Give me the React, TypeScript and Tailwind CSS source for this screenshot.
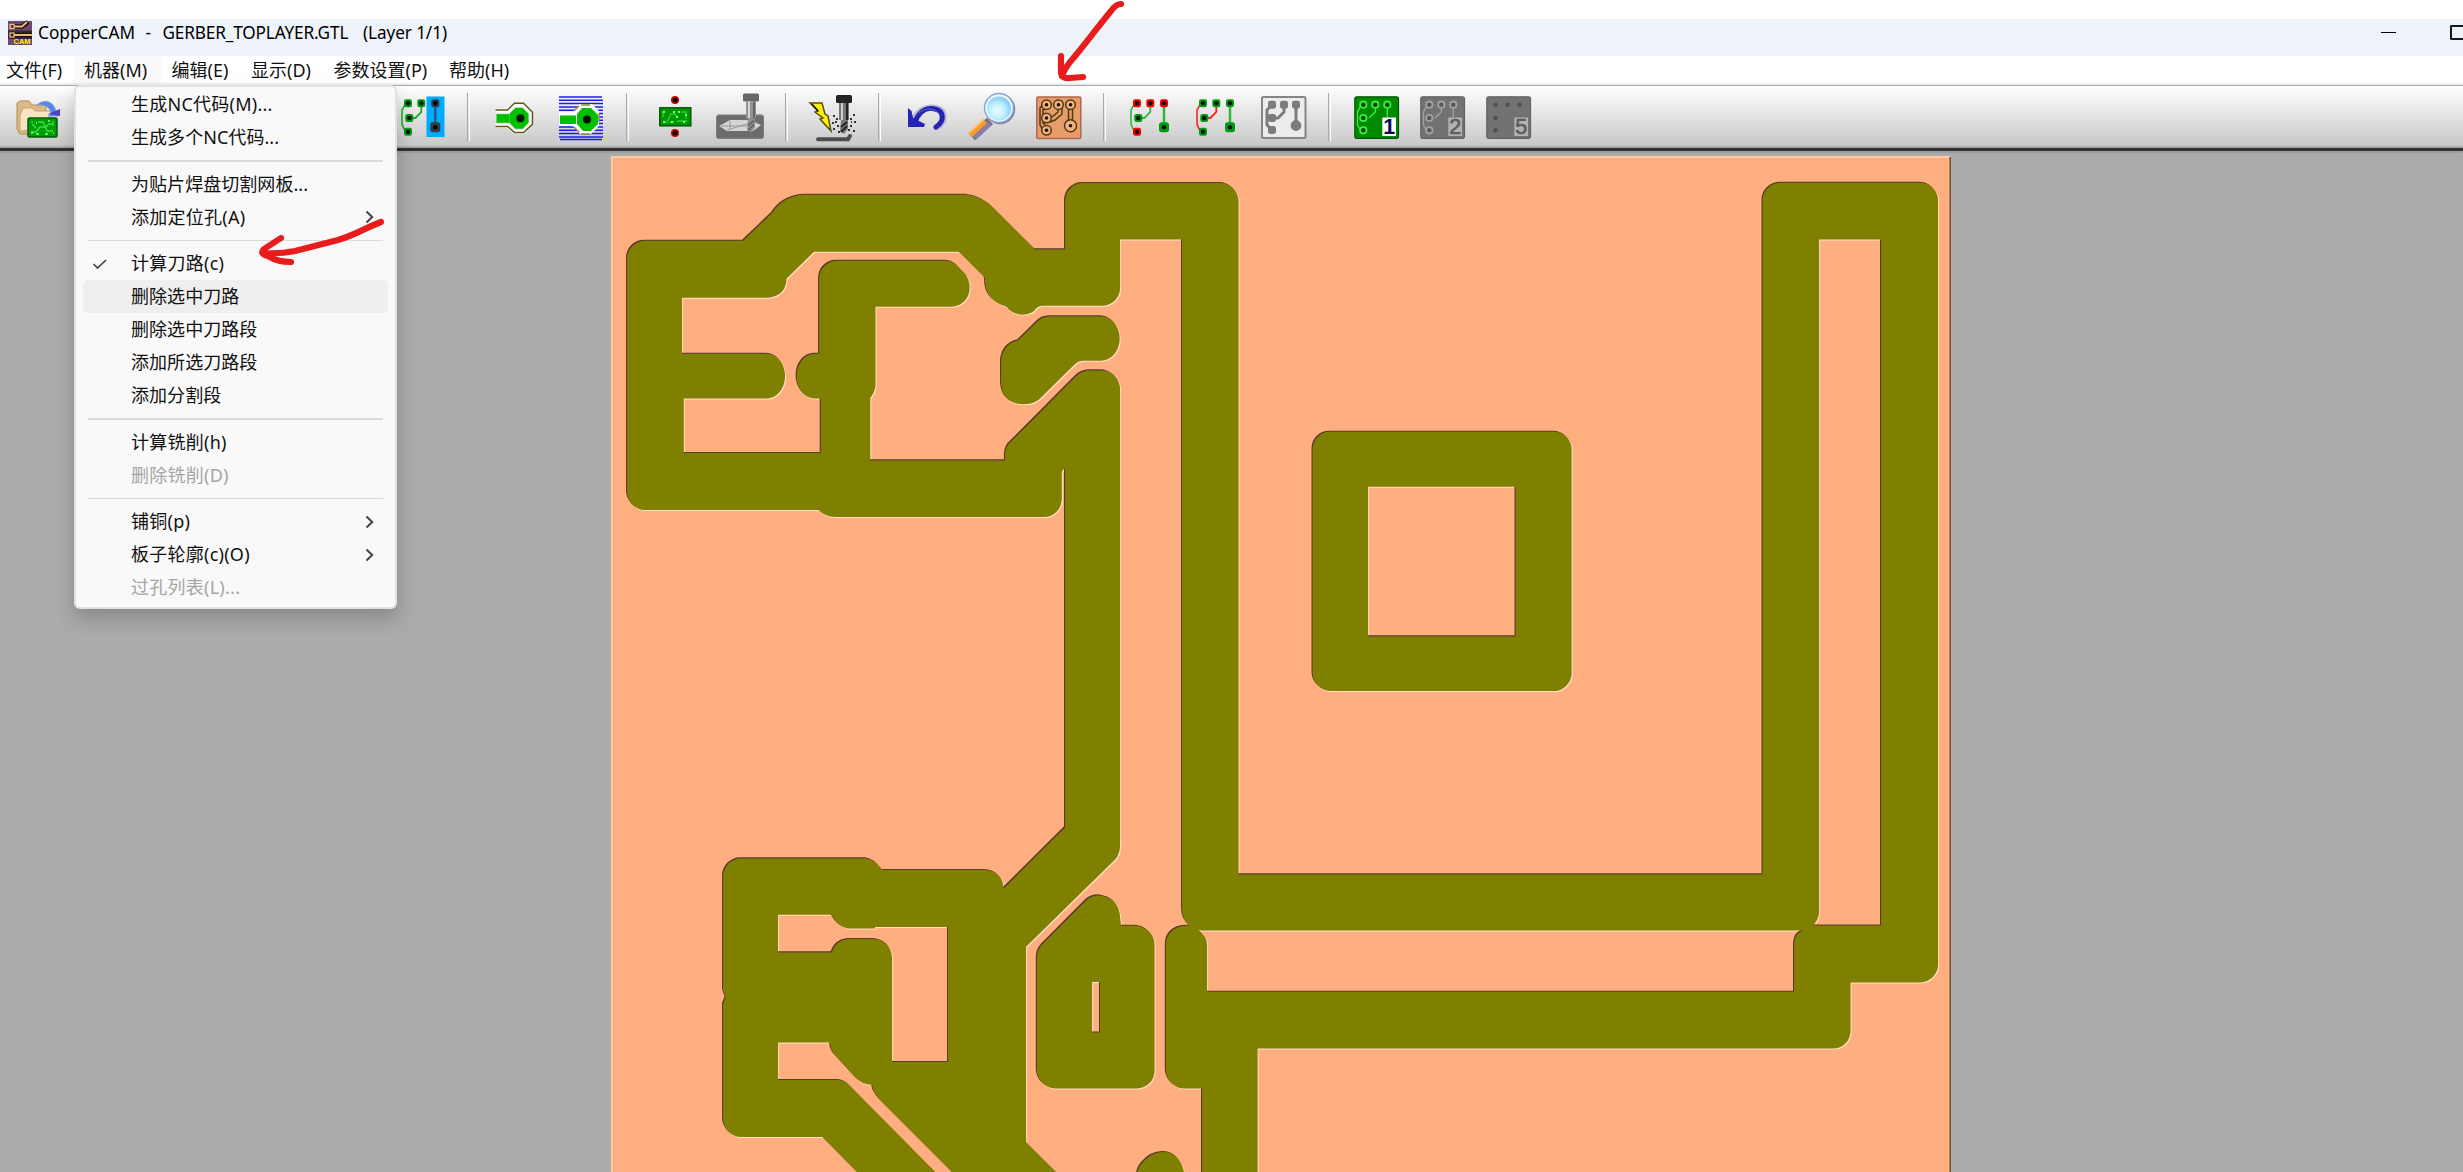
import React from "react";

const FONT = "font-['Noto_Sans','Noto_Sans_CJK_SC',sans-serif]";

/* ---------- board artwork ---------- */

const NET =
  "M627 259 A18 18 0 0 1 645 240.7 H743 L772 213 Q783 196 804 194.7 H966 Q982 196 995 209.5 L1035 249.3 H1065 V202 A18 18 0 0 1 1083 183 H1220 A18.5 18.5 0 0 1 1238.5 202 V874.3 H1762.5 V200 A18 18 0 0 1 1780 182.7 H1920 A18 18 0 0 1 1938 201 V964 A18 18 0 0 1 1920 982.3 H1850.5 V1031 A17.5 17.5 0 0 1 1833 1048.5 H1257.5 V1180 H1202 V1088.5 H1184 A19 19 0 0 1 1165.8 1069 V944 A20 18 0 0 1 1185 925.7 H1189 L1190.6 926.7 Q1182 920 1182 909 V239.3 H1120 V287 A18 18 0 0 1 1103 305.7 H1043 Q1038 306 1036 308.5 C1030 317 1014 317 1007 306.7 Q985 301 985 280 L984.6 277.3 L959 251.7 H814 L786.5 278.5 Q786 296 768 297.7 H682 V353.7 H767 A18 22.3 0 0 1 767 398.3 H683.7 V453 H820.7 V398.3 H814.5 A18 22.3 0 0 1 814.5 353.7 H819 V279 A18 18 0 0 1 837 260.7 H946 Q952 261 956 264.5 L966 275 C974 289 968 305 952 306.7 H875.4 V385 Q875 392 870.2 398 V460.3 H1005 Q1004 450 1008.5 444 L1074.8 377.3 Q1081 370.3 1090 370.3 H1101 A19 19 0 0 1 1120 389 V845 Q1120 854 1115 859.5 L1026 946.7 V1142.3 L1064 1180 H960 L879 1099 Q873 1092 872 1085 Q861 1084 855 1077 L833 1053 Q830 1048 830 1042.3 H778 V1080 H838 Q843 1080 847.5 1083.5 L943 1180 H865 L822.5 1137 H741 A18.5 18.5 0 0 1 723 1118 V1004 L725.6 997.5 L723 990 V876 A18 18 0 0 1 741 858.3 H866 Q874 859 882.5 870 H985 Q1002 871 1003.7 888.3 L1065 827.3 V468.3 Q1062 469 1061.7 473 V499 A18 18 0 0 1 1044 517 H835 Q825 517 819 510 H645 A18.5 18.5 0 0 1 627 491 Z";

const HOLES = [
  "M1198 930.5 H1803 Q1795 933 1794 943 V991.7 H1207 V945 Q1207 936 1198 930.5 Z",
  "M1819 239.3 H1881 V925.5 H1813 L1811 927 Q1819 921 1819 911 Z",
  "M778 914.7 H831.5 Q837 927 848 928.3 H875 V927 H948 V1062 H892 V958 Q891 941 874 939 H848 Q836 940 831.5 952.3 H778 Z",
].join(" ");

const ISLANDS = [
  "M1330 431.7 H1554 A17.5 17.5 0 0 1 1571.5 449 V673 A18 18 0 0 1 1553 691 H1331 A18.5 18.5 0 0 1 1312.5 673 V449 A17.5 17.5 0 0 1 1330 431.7 Z M1368 486.7 V636.3 H1515.5 V486.7 Z",
  "M1001 360 Q1003 344 1018.5 340 L1036 322.7 Q1042 316.3 1050 316.3 H1101 A18.6 22.2 0 0 1 1101 360.7 H1082 Q1078 361 1075 364 L1039 399.3 Q1031 405 1020 404 Q1002 402 1001 383 Z",
  "M1036.8 957 Q1037 949 1043 943.5 L1087 899.3 Q1093 895 1099 895.3 Q1119 898 1120 917 L1121 925.7 H1134 A20 19 0 0 1 1154.5 945 V1071 A17.5 17.5 0 0 1 1137 1088.3 H1055 A18.5 18.5 0 0 1 1036.8 1069 Z M1092 982 V1032.5 H1100 V982 Z",
  "M1136 1180 Q1137 1168 1142 1163 Q1151 1152 1163 1152 C1176 1152 1184 1162 1185 1180 Z",
].join(" ");

const COPPER = `${NET} ${HOLES} ${ISLANDS}`;

function Board() {
  return (
    <svg className="block h-[1016px] w-[1340px]" viewBox="611 156 1340 1016">
      <rect x="611" y="156" width="1340" height="1016" fill="#ffae80" />
      <g fillRule="evenodd">
        <path d={COPPER} fill="#ffe0c4" transform="translate(1.1 1.1)" />
        <path d={COPPER} fill="#5c3a2c" transform="translate(-1 -1)" />
        <path d={COPPER} fill="#808000" transform="translate(0.1 0.1)" />
      </g>
      <path d="M611.8 1172V157H1950" fill="none" stroke="#ffd3b5" strokeWidth="1.5" />
      <path d="M1950.2 157V1172" stroke="#7c5340" strokeWidth="1.6" />
    </svg>
  );
}

/* ---------- toolbar icons, each drawn in a 66x60 cell ---------- */

function Cell({ children }: { children: React.ReactNode }) {
  return (
    <svg className="h-[60px] w-[66px] shrink-0" viewBox="0 0 66 60" fill="none">
      {children}
    </svg>
  );
}

function Sep() {
  return (
    <div className="flex h-[60px] w-[27px] shrink-0 items-center justify-center">
      <div className="mt-[-2px] h-12 w-[3px] border-r-[1.5px] border-l-[1.5px] border-l-[#a9a9a9] border-r-white" />
    </div>
  );
}

function Pad({ x, y, c, r = 4 }: { x: number; y: number; c: string; r?: number }) {
  return (
    <g>
      <rect x={x - r} y={y - r} width={2 * r} height={2 * r} rx={r * 0.55} fill={c} />
      <circle cx={x} cy={y} r="2.2" fill="#000" opacity="0.9" />
    </g>
  );
}

const LEFT_TRACK = "M19 15.3L15.5 17.5L13 22V36L15 41L19 43.7";
const MID_TRACK = "M32.3 15.3V24L26.5 30H20";

function Net({ end, left, mid, middlePads }: { end: string; left: string; mid: string; middlePads: string }) {
  return (
    <g>
      <path d={LEFT_TRACK} stroke={left} strokeWidth="1.6" />
      <path d={MID_TRACK} stroke={mid} strokeWidth="1.8" />
      <Pad x={19} y={15.3} c={end} />
      <Pad x={32.3} y={15.3} c={end} />
      <Pad x={20.3} y={30} c={middlePads} />
      <Pad x={19} y={43.7} c={end} />
    </g>
  );
}

function FolderIcon() {
  return (
    <Cell>
      <path d="M12 15L15 13H24L27 17H41V24L44 25L40 46H15L12 41Z" fill="#dcb987" stroke="#b28a55" />
      <path d="M15 27L18 20H27L30 23H47L44 41L15 43Z" fill="#f6e4c2" stroke="#c6a370" />
      <path d="M32 17C38 11 49 12 51 24L55 22L53 28H43L46 25C45 20 41 16 32 17Z" fill="#5b86e8" stroke="#7ba2e6" />
      <path d="M43 26L55 21V28Z" fill="#4b44c4" />
      <rect x="23" y="30" width="29" height="19" rx="1.5" fill="#029c04" stroke="#075a08" strokeWidth="1.5" />
      <path d="M26 44H31L35 39H41L44 36H48M27 36L31 40M33 34H38L42 43H48M27 33V35M48 33V38" stroke="#39e44a" strokeWidth="1.3" />
      <path d="M26 45H28M31 46H34M40 46H43M48 45H49M31 35H32M43 33H45" stroke="#8dfc85" strokeWidth="1.6" />
    </Cell>
  );
}

function IsolationPad() {
  return (
    <g>
      <path d="M12 18H24L31 12H40L48 20V31L40 39H31L24 33H12" stroke="#fff" strokeWidth="4" />
      <path d="M12 17.2H24L31 10.5H40L49 19.5V31.5L40 39.8H31L24 33.6H12" stroke="#62561d" strokeWidth="1.5" />
      <path d="M13 21.3H26V30H13Z" fill="#00c000" />
      <path d="M32 15H39L45 21V30L39 36H32L26 30V21Z" fill="#00c000" />
      <circle cx="37" cy="25.5" r="4" fill="#001400" />
    </g>
  );
}

function HatchIcon() {
  return (
    <Cell>
      <path
        d="M11 9H54M11 12.3H55M11 15.6H55M11 18.9H55M11 22.2H55M11 25.5H55M11 39H55M11 42.3H55M11 45.6H55M11 48.9H55M12 51.5H54M49 29H55M49 32.3H55M48 35.6H55"
        stroke="#1c1cf0"
        strokeWidth="1.5"
      />
      <path d="M11 24H25L32 16H44L51 23V38L43 46H32L25 38H11Z" fill="#fff" />
      <path d="M33 17H42M33 46H42M26 23L31 18M26 39L31 44M51 25V36" stroke="#91863a" strokeWidth="1.4" strokeDasharray="9 2" />
      <path d="M12 27.5H28V36H12Z" fill="#00c000" />
      <path d="M34 20H43L50 27V36L43 43H35L29 36V26Z" fill="#00c000" />
      <circle cx="39" cy="31.5" r="4" fill="#001400" />
    </Cell>
  );
}

function AlignIcon() {
  return (
    <Cell>
      {[12, 45].map((y) => (
        <g key={y}>
          <circle cx="34" cy={y} r="4" fill="#cf0000" />
          <circle cx="34" cy={y} r="2.5" fill="#130000" />
        </g>
      ))}
      <rect x="18.8" y="19.8" width="31" height="18" fill="#009600" stroke="#05590a" strokeWidth="1.5" />
      <path d="M22 34H26L30 26H34L37 30M40 24H45V31M22 23V29M36 33H46M29 34H33" stroke="#23d438" strokeWidth="1.3" />
      <path d="M22 34H24M32 24H34M37 24H39M44 27H46M35 29H37M30 34H32M42 34H44M22 24H24" stroke="#7bff7b" strokeWidth="1.8" />
    </Cell>
  );
}

function Spindle({ x, y, c, body }: { x: number; y: number; c: string; body: string }) {
  return (
    <g>
      <rect x={x - 8} y={y} width="16" height="8" rx="1.5" fill={c} />
      <rect x={x - 5} y={y + 8} width="10" height="17" fill={body} />
      <path d={`M${x - 2} ${y + 8}v17`} stroke="#e4e4e4" strokeWidth="1.6" />
      <path d={`M${x + 3} ${y + 8}v17`} stroke={c} strokeWidth="2" />
      <path d={`M${x - 3} ${y + 25}h7v9l-4 5l-4 -3z`} fill={body} />
      <path d={`M${x - 3} ${y + 32}l6 -5M${x - 3} ${y + 37}l6 -6`} stroke={c} strokeWidth="1.8" />
    </g>
  );
}

function MillIcon() {
  return (
    <Cell>
      <rect x="9.5" y="27" width="47" height="23.5" rx="2" fill="#6c6c6c" stroke="#808080" />
      <path d="M12 38L23 32H43L54 37L46 43H20Z" fill="#d5d5d5" />
      <path d="M14 38H43M23 33V42M20 42L46 34" stroke="#989898" />
      <Spindle x={44} y={5.5} c="#666" body="#929292" />
    </Cell>
  );
}

function DrillIcon() {
  return (
    <Cell>
      <path d="M10 15H22L25 26L28 28L31 43L20 31L23 30L15 24L18 23Z" fill="#ffef0a" stroke="#57500c" strokeWidth="1.5" />
      <path d="M12 16L18 23" stroke="#1b1b00" strokeWidth="1.5" />
      <path
        d="M33 28h2M36 31h2M32 35h2M37 38h2M33 41h2M38 44h2M53 27h2M50 31h2M54 34h2M50 38h2M53 43h2M48 42h2M35 34h2M51 34h1"
        stroke="#333"
        strokeWidth="1.8"
      />
      <Spindle x={44} y={7} c="#242424" body="#777" />
      <path d="M18 51.3H48L50 48" stroke="#4d4d4d" strokeWidth="4" strokeLinecap="round" />
    </Cell>
  );
}

function UndoIcon() {
  return (
    <Cell>
      <path d="M19 36C23 22 34 18 43 20C52 22 54 33 44 39" stroke="#8d8dc8" strokeWidth="6" strokeLinecap="round" opacity="0.55" />
      <path d="M22 34C27 22 35 19 42 21C51 23 52 33 43 39" stroke="#2424b4" strokeWidth="5" strokeLinecap="round" />
      <path d="M15 20L18.5 23L20 30L32 36L31 39L15 39Z" fill="#2424b4" />
      <path d="M26 25C33 19 42 20 46 26" stroke="#6767df" strokeWidth="1" />
    </Cell>
  );
}

function MagnifierIcon() {
  return (
    <Cell>
      <defs>
        <radialGradient id="lens" cx="0.42" cy="0.6" r="0.65">
          <stop offset="0" stopColor="#effeff" />
          <stop offset="0.55" stopColor="#b5edff" />
          <stop offset="1" stopColor="#7fc0ee" />
        </radialGradient>
      </defs>
      <path d="M31 33L13 49" stroke="#77707e" strokeWidth="9" />
      <path d="M26 33L11 47" stroke="#f39a2c" strokeWidth="6" />
      <path d="M25 31L10 45" stroke="#ffc777" strokeWidth="1.8" />
      <path d="M31 36L16 50" stroke="#8780ae" strokeWidth="4" />
      <circle cx="41" cy="21" r="15.2" fill="#7a7fae" />
      <circle cx="40" cy="20" r="14.5" fill="#e9f7ff" stroke="#8aa6cf" strokeWidth="1.4" />
      <circle cx="40" cy="20.5" r="12" fill="url(#lens)" />
    </Cell>
  );
}

const BOX_PADS: [number, number][] = [
  [21.5, 16.7],
  [33.5, 16.7],
  [45.5, 16.7],
  [21.5, 30],
  [21.5, 42.3],
];

function CopperIcon() {
  return (
    <Cell>
      <rect x="11.8" y="9" width="44" height="41.5" rx="1.5" fill="#e89b6d" stroke="#b0674a" strokeWidth="1.5" />
      <g stroke="#4c3c0b">
        <path d="M20 14L15 20V37L20 45M24 20L18 22V35L20 37M33 20V24L27 29M37 19V26L30 32L25 34M43.5 20V33M47.5 20V33" strokeWidth="1.5" />
        {BOX_PADS.map(([x, y]) => (
          <circle key={`${x}-${y}`} cx={x} cy={y} r="4.8" fill="#f3ae83" strokeWidth="1.5" />
        ))}
        <circle cx="45.5" cy="37.7" r="6" fill="#f3ae83" strokeWidth="1.5" />
      </g>
      {[...BOX_PADS, [45.5, 37.7]].map(([x, y]) => (
        <circle key={`h${x}-${y}`} cx={x} cy={y} r="1.8" fill="#1b1200" />
      ))}
    </Cell>
  );
}

function GrayNetIcon() {
  return (
    <Cell>
      <rect x="12" y="9" width="43.5" height="41" rx="1.5" fill="#ececec" stroke="#858585" strokeWidth="2" />
      <path d="M22 17L17 22V37L22 42M34 17V24L28 30H22M46 17V37" stroke="#7c7c7c" strokeWidth="3" />
      {[[22, 16.7], [34, 16.7], [46, 16.7], [22, 30], [22, 42]].map(([x, y]) => (
        <rect key={`${x}-${y}`} x={x - 4} y={y - 4} width="8" height="8" rx="2.4" fill="#7c7c7c" />
      ))}
      <circle cx="46" cy="37.5" r="5.4" fill="#7c7c7c" />
    </Cell>
  );
}

function LayerIcon({ n, active, tracks }: { n: string; active?: boolean; tracks?: boolean }) {
  const line = active ? "#35f040" : "#a2a2a2";
  return (
    <Cell>
      <rect
        x="11.8"
        y="8.8"
        width="43.7"
        height="41.5"
        rx="2"
        fill={active ? "#008a00" : "#727272"}
        stroke={active ? "#075407" : "#616161"}
        strokeWidth="1.2"
      />
      {tracks ? (
        <g stroke={line}>
          <path d="M17 19L14.5 24V37L17 41M32.3 20V24L26 30M44.3 20V29" strokeWidth="1.3" />
          {BOX_PADS.map(([x, y]) => (
            <circle key={`${x}-${y}`} cx={x - 1.2} cy={y} r="3.2" strokeWidth="1.8" fill={active ? "#053d05" : "#585858"} />
          ))}
        </g>
      ) : (
        BOX_PADS.map(([x, y]) => <circle key={`${x}-${y}`} cx={x - 1} cy={y} r="2.2" fill="#505050" />)
      )}
      <rect x="39.3" y="29.5" width="13.7" height="18.5" fill={active ? "#fff" : "#b1b1b1"} />
      <text
        x="46.2"
        y="46.4"
        textAnchor="middle"
        fontFamily="Liberation Sans"
        fontWeight={active ? "bold" : "normal"}
        fontSize="21.5"
        fill={active ? "#090952" : "#5c5c5c"}
        stroke={active ? "none" : "#5c5c5c"}
        strokeWidth="0.6"
      >
        {n}
      </text>
    </Cell>
  );
}

function Toolbar() {
  return (
    <div className="flex h-[65px] shrink-0 border-b-[3px] border-[#333033] bg-[linear-gradient(to_bottom,#fff_0,#fafafa_8%,#c9c9c9_94%,#c4c4c4_96%,#969696_100%)] pt-[2px] pl-[5px]">
      <FolderIcon />
      <div className="w-[318px] shrink-0" />
      <Cell>
        <rect x="37.5" y="8.5" width="18" height="40.5" fill="#00aaff" />
        <Net end="#009b12" left="#17ae2a" mid="#17ae2a" middlePads="#009b12" />
        <path d="M46.3 15V40" stroke="#30495c" strokeWidth="2" />
        <Pad x={46.3} y={15.3} c="#353b43" />
        <Pad x={46.3} y={39.3} c="#353b43" r={5} />
      </Cell>
      <Sep />
      <Cell>
        <g transform="translate(1.5 4.8)">
          <IsolationPad />
        </g>
      </Cell>
      <HatchIcon />
      <Sep />
      <AlignIcon />
      <MillIcon />
      <Sep />
      <DrillIcon />
      <Sep />
      <UndoIcon />
      <MagnifierIcon />
      <CopperIcon />
      <Sep />
      <Cell>
        <Net end="#f50000" left="#2fb83c" mid="#2fb83c" middlePads="#009b12" />
        <path d="M46 15V39" stroke="#2fb83c" strokeWidth="2.5" />
        <Pad x={46} y={15.3} c="#f50000" />
        <Pad x={46} y={39.3} c="#009b12" r={5} />
      </Cell>
      <Cell>
        <Net end="#009b12" left="#ff2020" mid="#ff2020" middlePads="#009b12" />
        <path d="M46 15V39" stroke="#2fb83c" strokeWidth="2.5" />
        <Pad x={46} y={15.3} c="#009b12" />
        <Pad x={46} y={39.3} c="#009b12" r={5} />
      </Cell>
      <GrayNetIcon />
      <Sep />
      <LayerIcon n="1" active tracks />
      <LayerIcon n="2" tracks />
      <LayerIcon n="5" />
    </div>
  );
}

/* ---------- title and menu bars ---------- */

function AppIcon() {
  return (
    <svg className="mt-[-1px] h-6 w-6 shrink-0 overflow-visible" viewBox="0 0 24 24" fill="none">
      <rect width="24" height="24" fill="#6b4a6e" />
      <path d="M0 9.5H24V18H0Z" fill="#3a2539" />
      <path d="M4 5.5H14L20 1M4 14H24" stroke="#1c0f12" strokeWidth="4.6" />
      <path d="M6 5.5H14L19 1M6 14H24" stroke="#e8bd7b" strokeWidth="1.8" />
      <rect x="2" y="3.5" width="4" height="4" stroke="#e8bd7b" strokeWidth="1.3" />
      <rect x="2" y="12" width="4" height="4" stroke="#e8bd7b" strokeWidth="1.3" />
      <text x="5.5" y="23.4" fontFamily="Liberation Sans" fontWeight="bold" fontSize="7.5" fill="#fff200">
        CAM
      </text>
    </svg>
  );
}

function TitleBar() {
  return (
    <div className="flex h-[37px] shrink-0 items-start bg-[#eef3fa]">
      <div className="flex h-7 w-full items-center pl-2">
        <AppIcon />
        <span className="ml-[6px] text-[17.2px] whitespace-pre text-black">
          <span className="inline-block w-[96px] tracking-[0.05px]">CopperCAM</span>
          <span className="inline-block w-[28.5px] text-center">-</span>
          <span className="inline-block w-[200.5px] tracking-[-0.15px]">GERBER_TOPLAYER.GTL</span>
          <span className="inline-block tracking-[-0.1px]">(Layer 1/1)</span>
        </span>
      </div>
      <div className="flex shrink-0 items-start pt-[6px]">
        <div className="mt-[7px] mr-[54px] h-px w-[15px] bg-black" />
        <div className="h-[15px] w-[13px] rounded-l-[2px] border-2 border-r-0 border-[#17191b]" />
      </div>
    </div>
  );
}

function MenuBar() {
  return (
    <div className="flex h-[27px] shrink-0 bg-white text-[18px] leading-[28.5px] whitespace-nowrap text-[#111]">
      <div className="w-[74px] pl-[6px]">文件(F)</div>
      <div className="w-[87px] bg-[#f9f9f9] pl-[10px]">机器(M)</div>
      <div className="w-[80px] pl-[10.5px]">编辑(E)</div>
      <div className="w-[83px] pl-[10px]">显示(D)</div>
      <div className="w-[115px] pl-[9.5px]">参数设置(P)</div>
      <div className="pl-[10px]">帮助(H)</div>
    </div>
  );
}

/* ---------- drop-down menu ---------- */

type Entry = { text: string; sub?: boolean; checked?: boolean; hover?: boolean; off?: boolean };

const GROUPS: Entry[][] = [
  [{ text: "生成NC代码(M)..." }, { text: "生成多个NC代码..." }],
  [{ text: "为贴片焊盘切割网板..." }, { text: "添加定位孔(A)", sub: true }],
  [
    { text: "计算刀路(c)", checked: true },
    { text: "删除选中刀路", hover: true },
    { text: "删除选中刀路段" },
    { text: "添加所选刀路段" },
    { text: "添加分割段" },
  ],
  [{ text: "计算铣削(h)" }, { text: "删除铣削(D)", off: true }],
  [{ text: "铺铜(p)", sub: true }, { text: "板子轮廓(c)(O)", sub: true }, { text: "过孔列表(L)...", off: true }],
];

function MachineMenu() {
  return (
    <div className="absolute top-[84.5px] left-[74px] h-[524px] w-[323px] rounded-[6px] border-2 border-[#e2e2e2] bg-[#f9f9f9] px-[7px] pt-[1.5px] shadow-[0_10px_20px_rgba(0,0,0,0.2)]">
      {GROUPS.map((group, i) => (
        <div key={i}>
          {i > 0 && (
            <div className="flex h-[13.5px] items-center px-[5px]">
              <div className="h-[1.5px] w-full bg-[#dadada]" />
            </div>
          )}
          {group.map((e) => (
            <div
              key={e.text}
              className={`flex h-[33px] items-center rounded-[5px] text-[18px] ${e.hover ? "bg-[#efefef]" : ""} ${
                e.off ? "text-[#a5a5a5]" : "text-[#111]"
              }`}
            >
              <div className="flex w-[48px] shrink-0 pl-[9px]">
                {e.checked && (
                  <svg className="h-3 w-4" viewBox="0 0 16 12" fill="none">
                    <path d="M1.5 6L5.5 10L14 2" stroke="#444" strokeWidth="1.7" />
                  </svg>
                )}
              </div>
              <span className={`grow whitespace-nowrap ${e.text.includes("(") ? "tracking-[0.25px]" : "tracking-[0.05px]"}`}>
                {e.text}
              </span>
              {e.sub && (
                <svg className="mr-[14px] h-[14px] w-[9px]" viewBox="0 0 9 14" fill="none">
                  <path d="M1.5 1.5L7.2 7L1.5 12.5" stroke="#444" strokeWidth="2" />
                </svg>
              )}
            </div>
          ))}
        </div>
      ))}
    </div>
  );
}

function Arrows() {
  return (
    <svg
      className="pointer-events-none absolute top-0 left-0 h-[280px] w-[1200px]"
      viewBox="0 0 1200 280"
      fill="none"
      stroke="#e81c1c"
      strokeWidth="6.2"
      strokeLinecap="round"
      strokeLinejoin="round"
    >
      <path d="M1121 4Q1116 4 1111 11C1096 29 1084 46 1070 62Q1064 70 1062 76" />
      <path d="M1061 56V73Q1062 79 1070 78L1083 77" />
      <path d="M381 222C365 228 355 235 338 240L295 251Q280 254 264 253" />
      <path d="M281 238L264 249Q259 254 268 256Q278 262 291 262" />
    </svg>
  );
}

export default function App() {
  return (
    <div className={`relative flex h-[1172px] w-full flex-col overflow-hidden bg-white pt-[19px] ${FONT}`}>
      <TitleBar />
      <MenuBar />
      <div className="h-[3px] shrink-0 border-b border-[#a8a8a8] bg-[#efefef]" />
      <Toolbar />
      <div className="flex grow bg-[#ababab] pt-[5px] pl-[611px] shadow-[inset_0_2px_1px_rgba(0,0,0,0.08)]">
        <Board />
      </div>
      <MachineMenu />
      <Arrows />
    </div>
  );
}
